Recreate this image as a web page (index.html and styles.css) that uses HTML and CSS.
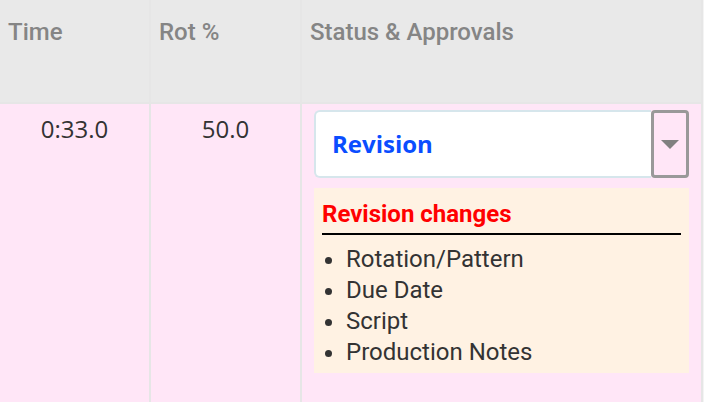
FILE: index.html
```html
<!DOCTYPE html>
<html lang="en">
<head>
    <meta charset="UTF-8">
    <meta name="viewport" content="width=device-width, initial-scale=1.0">
    <title>Status &amp; Approvals</title>
    <link rel="stylesheet" href="styles.css">
</head>
<body>
    <table class="sheet">
        <thead>
            <tr>
                <th class="col-time">Time</th>
                <th class="col-rot">Rot %</th>
                <th class="col-status">Status &amp; Approvals</th>
            </tr>
        </thead>
        <tbody>
            <tr>
                <td class="num">0:33.0</td>
                <td class="num">50.0</td>
                <td class="status">
                    <div class="picker">
                        <div class="picker-value">Revision</div>
                        <div class="picker-btn"><span class="caret"></span></div>
                    </div>
                    <div class="changes">
                        <h4>Revision changes</h4>
                        <ul>
                            <li>Rotation/Pattern</li>
                            <li>Due Date</li>
                            <li>Script</li>
                            <li>Production Notes</li>
                        </ul>
                    </div>
                </td>
            </tr>
        </tbody>
    </table>
</body>
</html>
```

FILE: styles.css
```css
body {
    margin: 0;
    font-family: Roboto, "Noto Sans", sans-serif;
    background: #f4f4f4;
}
.sheet {
    border-collapse: collapse;
    width: 703px;
    table-layout: fixed;
}
.sheet th, .sheet td {
    border: 2px solid #e6e6e6;
    border-top: none;
    vertical-align: top;
}
.sheet th:first-child, .sheet td:first-child {
    border-left: none;
}
.sheet th {
    background: #e9e9e9;
    color: #858585;
    font-size: 24px;
    font-weight: 500;
    text-align: left;
    height: 103px;
    padding: 18px 8px 0;
    box-sizing: border-box;
}
.col-time {
    width: 150px;
}
.col-rot {
    width: 151px;
}
.sheet td {
    background: #ffe6f7;
    height: 320px;
}
.num {
    font-family: "Open Sans", sans-serif;
    font-size: 24px;
    color: #333;
    text-align: center;
    padding-top: 8px;
}
.status {
    padding: 6px 12px 0;
}
.picker {
    display: flex;
    height: 68px;
}
.picker-value {
    flex: 1;
    background: #fff;
    border: 2px solid #d6e6ec;
    border-right: none;
    border-radius: 6px 0 0 6px;
    font-family: "Open Sans", sans-serif;
    font-weight: 700;
    font-size: 24px;
    color: #0a4dff;
    padding: 0 17px 2px 16px;
    display: flex;
    align-items: center;
}
.picker-btn {
    width: 32px;
    border: 3px solid #999;
    border-radius: 4px;
    display: flex;
    align-items: center;
    justify-content: center;
}
.caret {
    width: 0;
    height: 0;
    border-left: 9px solid transparent;
    border-right: 9px solid transparent;
    border-top: 9px solid #808080;
}
.changes {
    margin-top: 10px;
    background: #fff2e3;
    padding: 9px 8px 5px;
    width: 375px;
    box-sizing: border-box;
}
.changes h4 {
    margin: 0;
    color: #ff0000;
    font-size: 24px;
    font-weight: 700;
    line-height: 34px;
    padding-bottom: 2px;
    border-bottom: 2px solid #000;
}
.changes ul {
    margin: 9px 0 0;
    padding-left: 24px;
    color: #333;
    font-size: 24px;
    line-height: 31px;
}
```
